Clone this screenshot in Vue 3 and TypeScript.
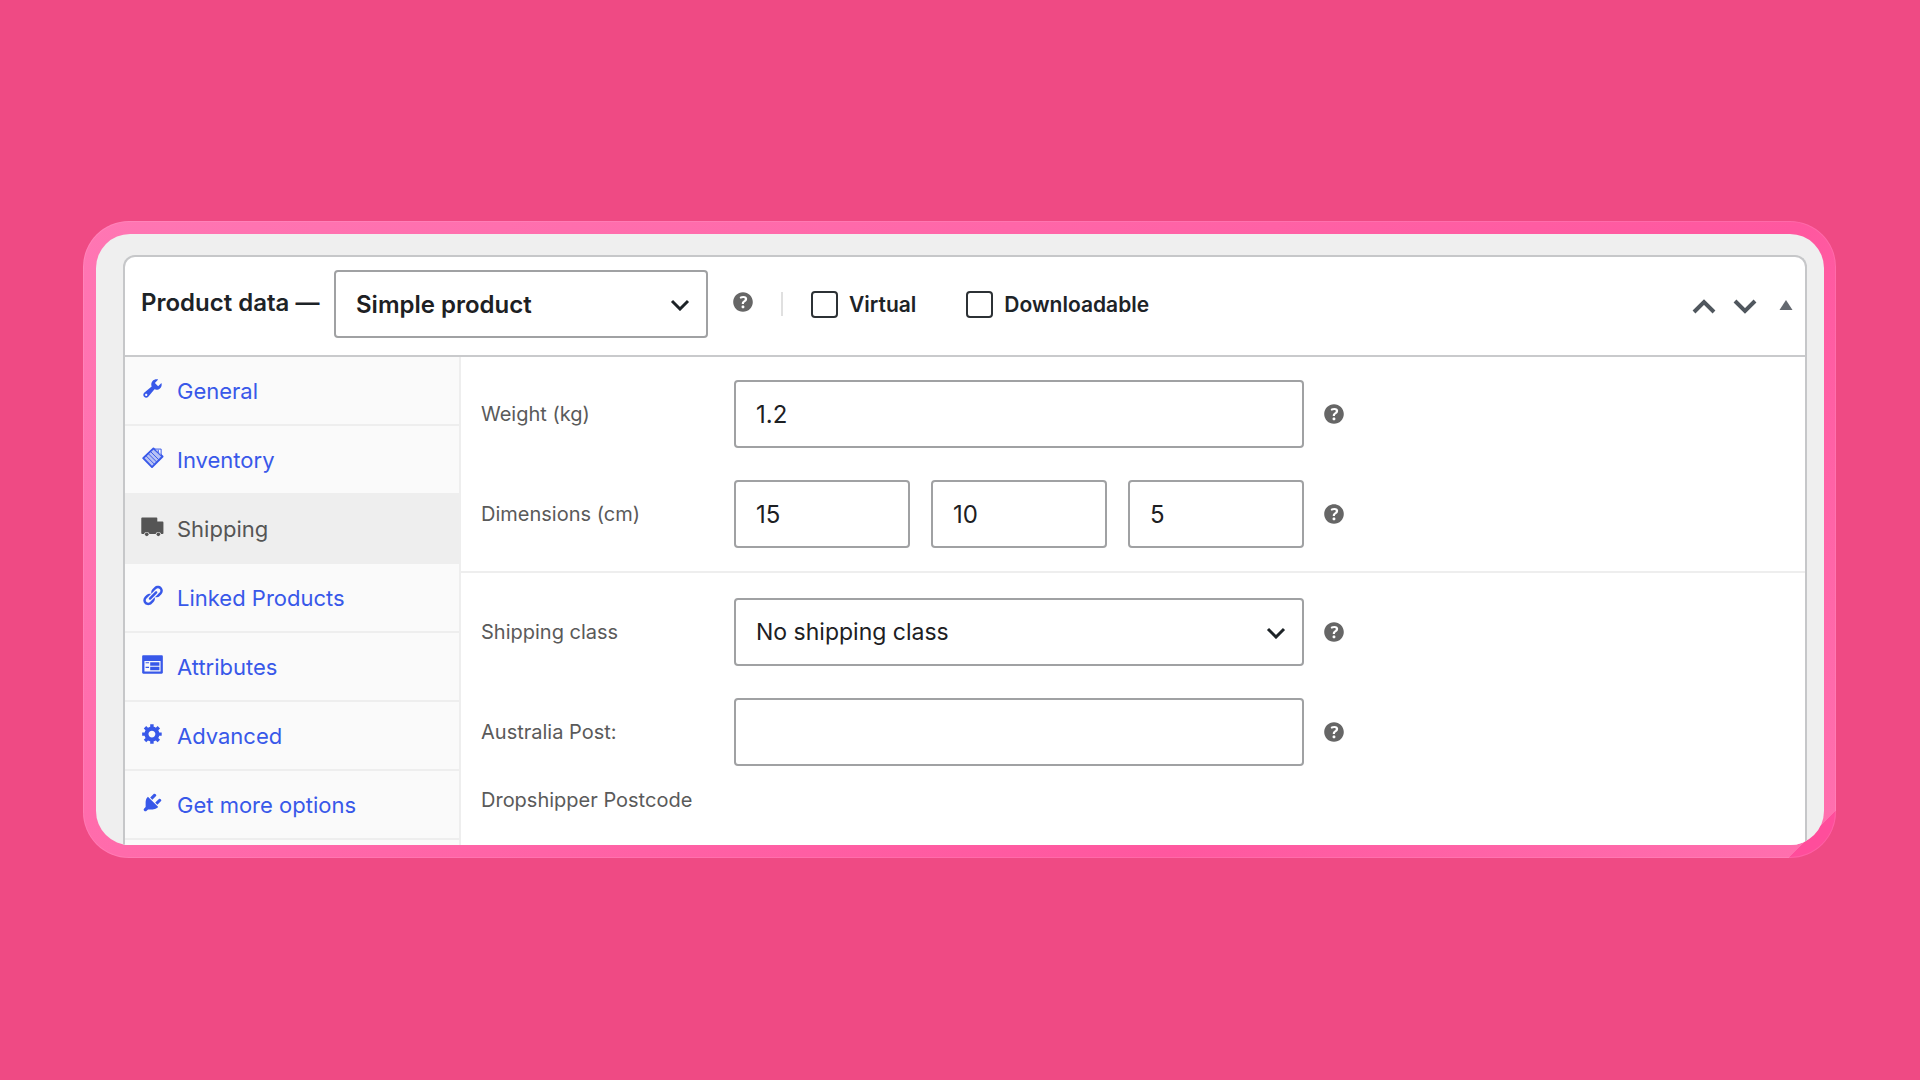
<script setup lang="ts">
import { ref } from 'vue'

interface Tab {
  id: string
  label: string
}

const tabs: Tab[] = [
  { id: 'general', label: 'General' },
  { id: 'inventory', label: 'Inventory' },
  { id: 'shipping', label: 'Shipping' },
  { id: 'linked', label: 'Linked Products' },
  { id: 'attributes', label: 'Attributes' },
  { id: 'advanced', label: 'Advanced' },
  { id: 'more', label: 'Get more options' },
]

const glyphs: Record<string, string> = {
  general:
    'M16.68 9.77c-1.34 1.34-3.3 1.67-4.95.99l-5.41 6.52c-.99.99-2.59.99-3.58 0s-.99-2.59 0-3.57l6.52-5.42c-.68-1.65-.35-3.61.99-4.95 1.28-1.28 3.12-1.62 4.72-1.06l-2.89 2.89 2.82 2.82 2.86-2.87c.53 1.58.18 3.39-1.08 4.65zM3.81 16.21c.4.39 1.04.39 1.43 0 .4-.4.4-1.04 0-1.43-.39-.4-1.03-.4-1.43 0-.39.39-.39 1.03 0 1.43z',
  linked:
    'M17.74 2.76c1.68 1.69 1.68 4.41 0 6.1l-1.53 1.52c-1.12 1.12-2.7 1.47-4.14 1.09l2.62-2.61.76-.77.76-.76c.84-.84.84-2.2 0-3.04-.84-.85-2.2-.85-3.04 0l-.77.76-3.38 3.38c-.37-1.44-.02-3.02 1.1-4.14l1.52-1.53c1.69-1.68 4.42-1.68 6.1 0zM8.59 13.43l5.34-5.34c.42-.42.42-1.1 0-1.52-.44-.43-1.13-.39-1.53 0l-5.33 5.34c-.42.42-.42 1.1 0 1.52.44.43 1.13.39 1.52 0zm-.76 2.29l4.14-4.15c.38 1.44.03 3.02-1.09 4.14l-1.52 1.53c-1.69 1.68-4.41 1.68-6.1 0-1.68-1.68-1.68-4.42 0-6.1l1.53-1.52c1.12-1.12 2.7-1.47 4.14-1.1l-4.14 4.15c-.85.84-.85 2.2 0 3.05.84.84 2.2.84 3.04 0z',
  attributes:
    'M2 2h16c.55 0 1 .45 1 1v14c0 .55-.45 1-1 1H2c-.55 0-1-.45-1-1V3c0-.55.45-1 1-1zm15 14V7H3v9h14zM4 8v1h3V8H4zm4 0v3h8V8H8zm-4 4v1h3v-1H4zm4 0v3h8v-3H8z',
  advanced:
    'M18 12h-2.18c-.17.7-.44 1.35-.81 1.93l1.54 1.54-2.1 2.1-1.54-1.54c-.58.36-1.23.63-1.91.79V19H8v-2.18c-.68-.16-1.33-.43-1.91-.79l-1.54 1.54-2.12-2.12 1.54-1.54c-.36-.58-.63-1.23-.79-1.91H1V9.03h2.17c.16-.7.44-1.35.8-1.94L2.43 5.55l2.1-2.1 1.54 1.54c.58-.37 1.24-.64 1.93-.81V2h3v2.18c.68.16 1.33.43 1.91.79l1.54-1.54 2.12 2.12-1.54 1.54c.36.59.64 1.24.8 1.94H18V12zm-8.5 1.5c1.66 0 3-1.34 3-3s-1.34-3-3-3-3 1.34-3 3 1.34 3 3 3z',
  more:
    'M13.11 4.36L9.87 7.6 8 5.73l3.24-3.24c.35-.34 1.05-.2 1.56.32.52.51.66 1.21.31 1.55zm-8 1.77l.91-1.12 9.01 9.01-1.19.84c-.71.71-2.63 1.16-3.82 1.16H6.14L4.9 17.26c-.59.59-1.54.59-2.12 0-.59-.58-.59-1.53 0-2.12l1.24-1.24v-3.88c0-1.13.4-3.19 1.09-3.89zm7.26 3.97l3.24-3.24c.34-.35 1.04-.21 1.55.31.52.51.66 1.21.31 1.55l-3.24 3.25z',
}

const helpGlyph =
  'M17 10c0-3.87-3.14-7-7-7-3.87 0-7 3.13-7 7s3.13 7 7 7c3.86 0 7-3.13 7-7zm-6.3 1.48H9.14v-.43c0-.38.08-.7.24-.98s.46-.57.88-.89c.41-.29.68-.53.81-.71.14-.18.2-.39.2-.62 0-.25-.09-.44-.28-.58-.19-.13-.45-.19-.79-.19-.58 0-1.25.19-2 .57l-.64-1.28c.87-.49 1.8-.74 2.77-.74.81 0 1.45.2 1.92.58.48.39.71.91.71 1.55 0 .43-.09.8-.29 1.11-.19.32-.57.67-1.11 1.06-.38.28-.61.49-.71.63-.1.15-.15.34-.15.57v.35zm-1.47 2.74c-.18-.17-.27-.42-.27-.73 0-.33.08-.58.26-.75s.43-.25.77-.25c.32 0 .57.09.75.26s.27.42.27.74c0 .3-.09.55-.27.72-.18.18-.43.27-.75.27-.33 0-.58-.09-.76-.26z'

const activeTab = ref('shipping')
const productType = ref('simple')
const virtual = ref(false)
const downloadable = ref(false)
const weight = ref('1.2')
const length = ref('15')
const width = ref('10')
const height = ref('5')
const shippingClass = ref('none')
const postcode = ref('')
</script>

<template>
  <main class="stage">
    <div class="frame">
      <div class="viewport">
        <section class="panel">
          <header class="head">
            <h2 class="title"><label for="product-type">Product data —</label></h2>
            <div class="select type-select">
              <select id="product-type" v-model="productType">
                <option value="simple">Simple product</option>
              </select>
              <svg class="chevron" viewBox="0 0 20 12" aria-hidden="true"><path d="M2 2l8 8 8-8" /></svg>
            </div>
            <button class="help head-help" type="button" aria-label="Product type help">
              <svg viewBox="0 0 20 20"><path :d="helpGlyph" /></svg>
            </button>
            <span class="rule"></span>
            <label class="check"><input v-model="virtual" type="checkbox" />Virtual</label>
            <label class="check"><input v-model="downloadable" type="checkbox" />Downloadable</label>
            <div class="order">
              <button type="button" aria-label="Move up">
                <svg width="24" height="16" viewBox="0 0 24 16"><path class="line" d="M2 14l10-10 10 10" /></svg>
              </button>
              <button type="button" aria-label="Move down">
                <svg width="24" height="16" viewBox="0 0 24 16"><path class="line" d="M2 3l10 10L22 3" /></svg>
              </button>
              <button class="toggle" type="button" aria-label="Toggle panel">
                <svg width="14" height="16" viewBox="0 0 14 16"><path class="solid" d="M7 2l6.500 10H.5z" /></svg>
              </button>
            </div>
          </header>

          <div class="body">
            <nav class="tabs">
              <a
                v-for="tab in tabs"
                :key="tab.id"
                href="#"
                class="tab"
                :class="{ active: tab.id === activeTab }"
                @click.prevent="activeTab = tab.id"
              >
                <svg v-if="tab.id === 'inventory'" class="icon" viewBox="0 0 24 24">
                  <path class="board" d="M13 2.500l9.500 8.500L11.500 22 2.300 12.700z" />
                  <path class="grid" d="M5 10l9.500 9.500M7.300 7.700l9.500 9.500M9.600 5.400l9.500 9.500" />
                  <path class="tip" d="M14.500 3.500h6.500v6.500z" />
                  <path class="page" d="M14.500 3.200h6.500v6.500M18 4v3" />
                </svg>
                <svg v-else-if="tab.id === 'shipping'" class="icon" viewBox="0 0 24 24">
                  <path
                    d="M1.200 2.500h15c.5 0 .8.300.8.800v3.500h5.500c.500 0 .9.400.9.900V19c0 .500-.4.900-.9.900h-1.500a3 3 0 0 0-5.800 0H8.900a3 3 0 0 0-5.800 0H1.200c-.5 0-.9-.4-.9-.9V3.400c0-.5.400-.9.900-.9z"
                  />
                  <circle cx="6" cy="20.200" r="1.900" />
                  <circle cx="18.100" cy="20.200" r="1.900" />
                </svg>
                <svg v-else class="icon" viewBox="0 0 20 20"><path :d="glyphs[tab.id]" /></svg>
                <span>{{ tab.label }}</span>
              </a>
            </nav>

            <form class="fields" @submit.prevent>
              <div class="group">
                <div class="row">
                  <label for="weight">Weight (kg)</label>
                  <div class="control"><input id="weight" v-model="weight" type="text" /></div>
                  <button class="help" type="button" aria-label="Weight help">
                    <svg viewBox="0 0 20 20"><path :d="helpGlyph" /></svg>
                  </button>
                </div>
                <div class="row">
                  <label for="length">Dimensions (cm)</label>
                  <div class="control triple">
                    <input id="length" v-model="length" type="text" aria-label="Length" />
                    <input v-model="width" type="text" aria-label="Width" />
                    <input v-model="height" type="text" aria-label="Height" />
                  </div>
                  <button class="help" type="button" aria-label="Dimensions help">
                    <svg viewBox="0 0 20 20"><path :d="helpGlyph" /></svg>
                  </button>
                </div>
              </div>
              <div class="group">
                <div class="row">
                  <label for="shipping-class">Shipping class</label>
                  <div class="control select">
                    <select id="shipping-class" v-model="shippingClass">
                      <option value="none">No shipping class</option>
                    </select>
                    <svg class="chevron" viewBox="0 0 20 12" aria-hidden="true"><path d="M2 2l8 8 8-8" /></svg>
                  </div>
                  <button class="help" type="button" aria-label="Shipping class help">
                    <svg viewBox="0 0 20 20"><path :d="helpGlyph" /></svg>
                  </button>
                </div>
                <div class="row">
                  <label for="postcode">Australia Post: Dropshipper Postcode</label>
                  <div class="control"><input id="postcode" v-model="postcode" type="text" /></div>
                  <button class="help" type="button" aria-label="Postcode help">
                    <svg viewBox="0 0 20 20"><path :d="helpGlyph" /></svg>
                  </button>
                </div>
              </div>
            </form>
          </div>
        </section>
      </div>
    </div>
  </main>
</template>

<style>
body {
  margin: 0;
  background: #ef4a84;
}
</style>

<style scoped>
* {
  box-sizing: border-box;
}
.stage {
  display: flex;
  flex-direction: column;
  justify-content: center;
  min-height: 100vh;
  padding: 0 84px 1px 83px;
  background: #ef4a84;
  font-family: Inter, "Liberation Sans", sans-serif;
  color: #1d2327;
}
.frame {
  padding: 13px 12px 13px 13px;
  border-radius: 46px;
  background: linear-gradient(135deg, #ff76b3 0%, #ff6bab 28%, #ff579f 72%, #ff6fae 98%, #ff4d9b 98%);
  box-shadow: inset 0 0 0 1px rgba(255, 255, 255, 0.1);
}
.viewport {
  overflow: hidden;
  padding: 21px 17px 0 27px;
  border-radius: 34px;
  background: #efefef;
}
.panel {
  overflow: hidden;
  border: 2px solid #c6c7c9;
  border-bottom: 0;
  border-radius: 12px 12px 0 0;
  background: #fff;
}
.head {
  display: flex;
  align-items: center;
  padding: 13px 12px 17px 16px;
  border-bottom: 2px solid #c9cacc;
}
.title {
  flex: none;
  width: 193px;
  margin: 0;
  padding-bottom: 3px;
  font-size: 24px;
  line-height: 28px;
  font-weight: 600;
  white-space: nowrap;
}
.select {
  position: relative;
}
.type-select {
  width: 374px;
}
.chevron {
  position: absolute;
  right: 18px;
  top: 29px;
  width: 20px;
  height: 12px;
  fill: none;
  stroke: #1d2327;
  stroke-width: 3;
  pointer-events: none;
}
select,
.control input {
  display: block;
  width: 100%;
  min-width: 0;
  height: 68px;
  margin: 0;
  padding: 0 20px;
  border: 2px solid #a0a1a3;
  border-radius: 4px;
  outline: 0;
  background: #fff;
  color: #1d2023;
  font-family: inherit;
  font-size: 24px;
  appearance: none;
}
.control select {
  font-size: 23px;
}
.type-select select {
  font-weight: 600;
}
button {
  display: flex;
  flex: none;
  padding: 0;
  border: 0;
  background: none;
}
.help svg {
  width: 28px;
  height: 28px;
  fill: #666;
}
.head-help {
  margin-left: 21px;
  padding-bottom: 4px;
}
.rule {
  width: 2px;
  height: 24px;
  margin: 0 28px 0 24px;
  background: #e0e0e0;
}
.check {
  display: flex;
  align-items: center;
  gap: 11px;
  margin-right: 50px;
  font-size: 21px;
  font-weight: 600;
}
.check input {
  width: 27px;
  height: 27px;
  margin: 0;
  border: 2px solid #2c3135;
  border-radius: 4px;
  background: #fff;
  appearance: none;
}
.order {
  display: flex;
  gap: 17px;
  margin-left: auto;
  padding-top: 4px;
}
.toggle {
  margin-left: 5px;
}
.line {
  fill: none;
  stroke: #50575e;
  stroke-width: 4;
}
.solid {
  fill: #646970;
}
.body {
  display: flex;
}
.tabs {
  flex: none;
  width: 336px;
  padding-bottom: 5px;
  border-right: 2px solid #eee;
  background: #fafafa;
}
.tab {
  display: flex;
  align-items: center;
  gap: 13px;
  height: 69px;
  padding-left: 16px;
  border-bottom: 2px solid #eee;
  color: #3858e9;
  font-size: 22px;
  text-decoration: none;
}
.tab.active {
  background: #eee;
  color: #555;
}
.icon {
  flex: none;
  width: 23px;
  height: 23px;
  margin-bottom: 5px;
  fill: currentColor;
}
.board {
  fill: currentColor;
  fill-opacity: 0.35;
  stroke: currentColor;
  stroke-width: 2;
  stroke-linejoin: round;
}
.grid,
.page {
  fill: none;
  stroke: currentColor;
  stroke-width: 1;
}
.tip {
  fill: #fafafa;
  fill-opacity: 0.6;
}
.fields {
  flex: 1;
}
.group {
  display: flex;
  flex-direction: column;
  gap: 32px;
  padding: 23px 20px;
}
.group + .group {
  padding: 25px 20px 11px;
  border-top: 2px solid #eee;
}
.row {
  display: flex;
}
.row label {
  flex: none;
  width: 253px;
  height: 68px;
  padding-right: 20px;
  color: #5a5a5a;
  font-size: 20px;
  line-height: 68px;
}
.control {
  flex: 0 1 570px;
}
.triple {
  display: grid;
  grid-template-columns: repeat(3, 1fr);
  gap: 21px;
}
.row .help {
  align-self: center;
  margin-left: 16px;
}
</style>
